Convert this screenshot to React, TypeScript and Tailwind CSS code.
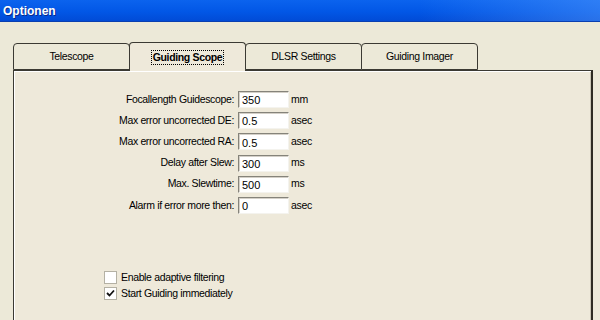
import React from "react";

const tabs = ["Telescope", "Guiding Scope", "DLSR Settings", "Guiding Imager"];

const fields = [
  { label: "Focallength Guidescope:", value: "350", unit: "mm" },
  { label: "Max error uncorrected DE:", value: "0.5", unit: "asec" },
  { label: "Max error uncorrected RA:", value: "0.5", unit: "asec" },
  { label: "Delay after Slew:", value: "300", unit: "ms" },
  { label: "Max. Slewtime:", value: "500", unit: "ms" },
  { label: "Alarm if error more then:", value: "0", unit: "asec" },
];

function Check({ checked, label }: { checked: boolean; label: string }) {
  return (
    <label className="flex items-center h-[16px]">
      <span className="w-[13px] h-[13px] bg-white border border-[#b4b1a4] flex items-center justify-center">
        {checked && (
          <svg width="9" height="9" viewBox="0 0 9 9">
            <path d="M1 4 L3.5 6.5 L8 1.5" stroke="#111" strokeWidth="1.8" fill="none" />
          </svg>
        )}
      </span>
      <span className="ml-[4px]">{label}</span>
    </label>
  );
}

export default function App() {
  const active = 1;

  return (
    <div className="w-[600px] h-[320px] overflow-hidden bg-[#ECE9D8] text-[10.5px] tracking-[-0.35px] text-black font-['Liberation_Sans',Arial,sans-serif]">
      {/* title bar */}
      <div className="h-[22px] bg-[linear-gradient(to_bottom,#0b63ee,#0257e6_55%,#014bd6)] border-b border-[#0a3fb0]">
        <div className="h-full flex items-center pl-[3px] bg-[linear-gradient(to_right,transparent_70%,rgba(90,160,255,0.45))]">
          <span className="text-white font-bold text-[12px] tracking-[0px] [text-shadow:1px_1px_0_#0a2a8a]">
            Optionen
          </span>
        </div>
      </div>

      <div className="pl-[13px] pr-[7px] pt-[20px]">
        {/* tabs */}
        <div className="flex items-end h-[28px] relative z-10">
          {tabs.map((t, i) =>
            i === active ? (
              <div
                key={t}
                className="-ml-[1px] w-[117px] h-[29px] -mb-[1px] bg-[#EEE9DA] border border-b-0 border-[#3b3a33] rounded-t-[4px] flex items-center justify-center"
              >
                <span className="font-bold border border-dotted border-black px-[1px] leading-[13px]">{t}</span>
              </div>
            ) : (
              <div
                key={t}
                className={`${i === 0 ? "" : "-ml-[1px]"} w-[117px] h-[27px] bg-[#ECE9D8] border border-[#3b3a33] rounded-t-[4px] flex items-center justify-center`}
              >
                {t}
              </div>
            )
          )}
        </div>

        {/* panel */}
        <div className="h-[260px] bg-[#EEE9DA] border-t border-l border-[#3b3a33] border-r-2 border-r-[#2e2b22] shadow-[inset_1px_1px_0_#ffffff,inset_-1px_0_0_#c9c5b4]">
          <div className="pt-[20px] flex flex-col gap-[4.2px]">
            {fields.map((f) => (
              <div key={f.label} className="flex items-center h-[17px]">
                <div className="w-[220px] text-right">{f.label}</div>
                <div className="ml-[4px] w-[51px] h-[17px] bg-white border-t border-l border-[#85837a] border-b border-r border-b-[#f4f3ee] border-r-[#f4f3ee] shadow-[inset_1px_1px_0_#d4d0c8] flex items-center pl-[3px] pt-[2px] text-[11px] tracking-[0px]">
                  {f.value}
                </div>
                <div className="ml-[2px]">{f.unit}</div>
              </div>
            ))}
          </div>

          <div className="mt-[56px] pl-[90px] flex flex-col">
            <Check checked={false} label="Enable adaptive filtering" />
            <Check checked={true} label="Start Guiding immediately" />
          </div>
        </div>
      </div>
    </div>
  );
}
